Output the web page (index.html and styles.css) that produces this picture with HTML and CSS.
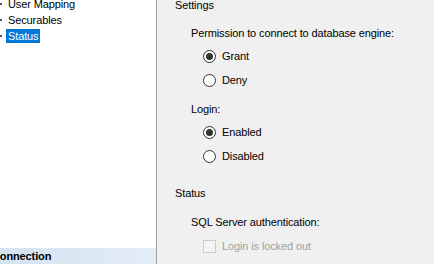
FILE: index.html
```html
<!DOCTYPE html>
<html>
<head>
<meta charset="utf-8">
<link rel="stylesheet" href="styles.css">
</head>
<body>
<div class="window">
  <div class="sidebar">
    <ul class="tree">
      <li class="node"><span class="dot"></span><span class="label">User Mapping</span></li>
      <li class="node"><span class="dot"></span><span class="label">Securables</span></li>
      <li class="node"><span class="dot"></span><span class="label selected">Status</span></li>
    </ul>
    <div class="connection">Connection</div>
  </div>
  <div class="content">
    <div class="heading first">Settings</div>
    <div class="label-line gap-12">Permission to connect to database engine:</div>
    <div class="option gap-7"><span class="radio checked"></span><span>Grant</span></div>
    <div class="option gap-8"><span class="radio"></span><span>Deny</span></div>
    <div class="label-line gap-13">Login:</div>
    <div class="option gap-7"><span class="radio checked"></span><span>Enabled</span></div>
    <div class="option gap-8"><span class="radio"></span><span>Disabled</span></div>
    <div class="heading gap-21">Status</div>
    <div class="label-line gap-13">SQL Server authentication:</div>
    <div class="option gap-8 disabled"><span class="checkbox"></span><span>Login is locked out</span></div>
  </div>
</div>
</body>
</html>
```
FILE: styles.css
```css
html, body {
  margin: 0;
  padding: 0;
  width: 434px;
  height: 264px;
  overflow: hidden;
  font-family: "Liberation Sans", Arial, sans-serif;
  font-size: 11px;
  letter-spacing: -0.12px;
  color: #000;
}
.window {
  display: flex;
  width: 434px;
  height: 264px;
}
.sidebar {
  width: 156px;
  border-right: 1px solid #a0a0a0;
  background: #fff;
  display: flex;
  flex-direction: column;
}
.tree {
  list-style: none;
  margin: -4px 0 0 0;
  padding: 0;
}
.node {
  height: 16px;
  display: flex;
  align-items: center;
  line-height: 14px;
}
.dot {
  width: 2px;
  height: 2px;
  background: #555;
  margin-right: 4px;
}
.label {
  padding: 0 2px;
  height: 14px;
}
.selected {
  background: #0078d7;
  color: #fff;
}
.connection {
  margin-top: auto;
  height: 16px;
  line-height: 16px;
  font-weight: bold;
  text-indent: -8px;
  overflow: hidden;
  white-space: nowrap;
  background: linear-gradient(to right, #d5e3f1, #dce8f4 60%, #e4edf6);
}
.content {
  flex: 1;
  background: #f0f0f0;
  padding-left: 18px;
  display: flex;
  flex-direction: column;
}
.heading, .label-line, .option {
  height: 16px;
  line-height: 16px;
  white-space: nowrap;
}
.first { margin-top: -3px; }
.label-line { padding-left: 16px; }
.option {
  padding-left: 28px;
  display: flex;
  align-items: center;
}
.gap-7 { margin-top: 7px; }
.gap-8 { margin-top: 8px; }
.gap-12 { margin-top: 12px; }
.gap-13 { margin-top: 13px; }
.gap-21 { margin-top: 21px; }
.radio {
  width: 11px;
  height: 11px;
  border: 1px solid #333;
  border-radius: 50%;
  background: #fff;
  margin-right: 6px;
  position: relative;
  flex: none;
}
.radio.checked::after {
  content: "";
  position: absolute;
  left: 2px;
  top: 2px;
  width: 7px;
  height: 7px;
  border-radius: 50%;
  background: #333;
}
.checkbox {
  width: 11px;
  height: 11px;
  border: 1px solid #cccccc;
  background: #f4f4f4;
  margin-right: 6px;
  flex: none;
}
.disabled { color: #a0a0a0; }
```
